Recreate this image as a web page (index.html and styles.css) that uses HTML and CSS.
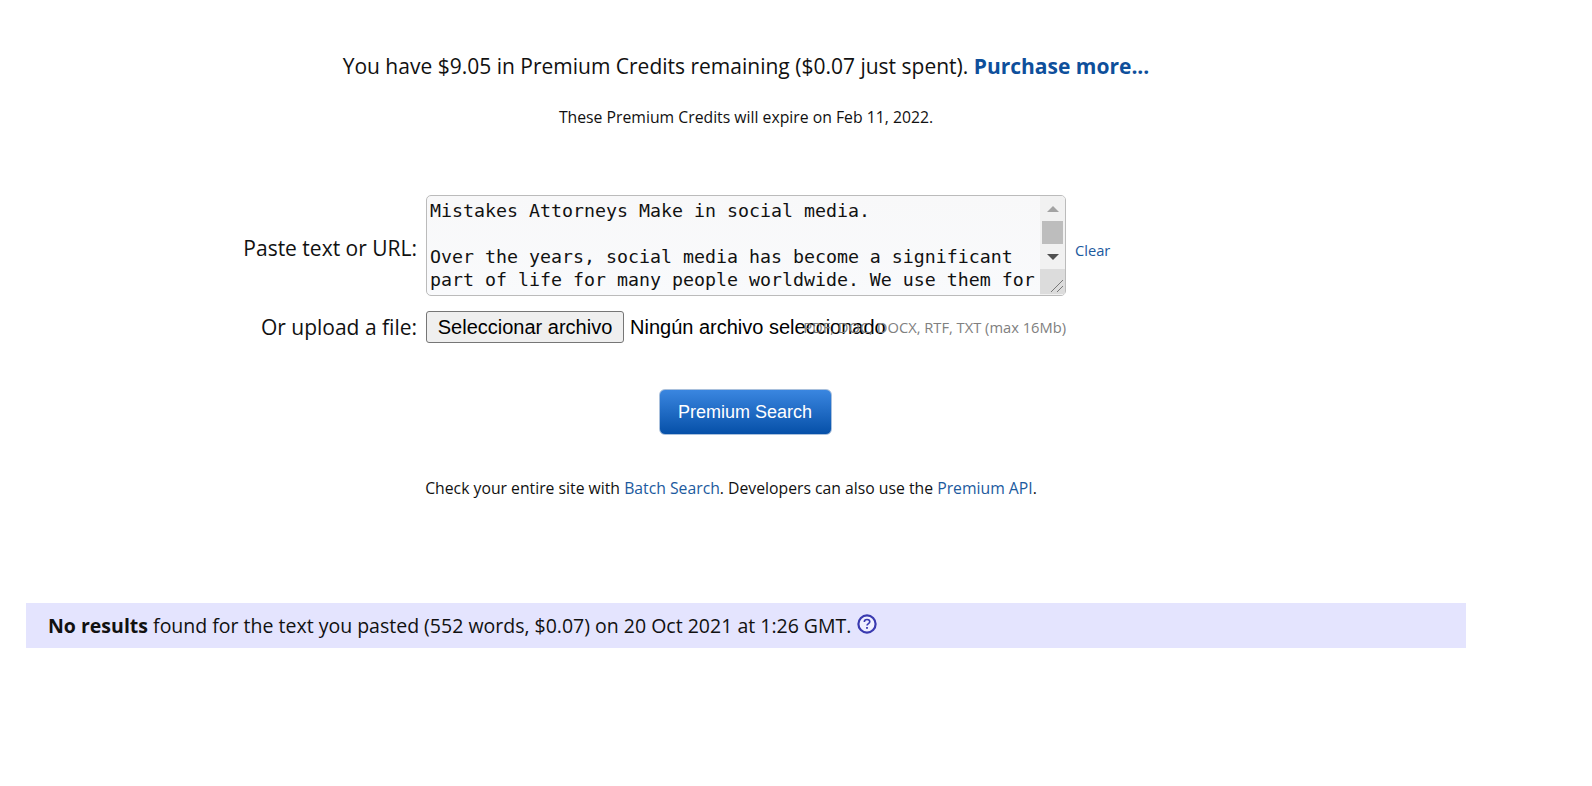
FILE: index.html
```html
<!DOCTYPE html>
<html lang="en">
<head>
<meta charset="utf-8">
<title>Premium Search</title>
<link rel="stylesheet" href="styles.css">
</head>
<body>
<main class="page">
  <p class="credits">You have $9.05 in Premium Credits remaining ($0.07 just spent). <a class="purchase" href="#">Purchase more...</a></p>
  <p class="expiry">These Premium Credits will expire on Feb 11, 2022.</p>
  <form class="search-form">
    <label class="field-label field-label-text" for="text">Paste text or URL:</label>
    <div class="field-main">
      <div class="text-box">
        <textarea class="text-input" id="text" spellcheck="false">Mistakes Attorneys Make in social media.

Over the years, social media has become a significant
part of life for many people worldwide. We use them for</textarea>
        <div class="scrollbar">
          <svg class="scroll-arrow" width="14" height="8" viewBox="0 0 14 8"><path d="M7 1 L13 7 H1 Z" fill="#a3a3a3"/></svg>
          <div class="scroll-thumb"></div>
          <svg class="scroll-arrow scroll-arrow-down" width="14" height="8" viewBox="0 0 14 8"><path d="M1 1 H13 L7 7 Z" fill="#505050"/></svg>
          <div class="scroll-corner">
            <svg width="25" height="25" viewBox="0 0 25 25"><path d="M11 23 L23 11 M17 23 L23 17" stroke="#777" stroke-width="1" fill="none"/></svg>
          </div>
        </div>
      </div>
      <a class="clear" href="#">Clear</a>
    </div>
    <label class="field-label field-label-file">Or upload a file:</label>
    <div class="file-row">
      <button class="file-button" type="button">Seleccionar archivo</button>
      <span class="file-name">Ningún archivo seleccionado</span>
      <span class="file-hint">PDF, DOC, DOCX, RTF, TXT (max 16Mb)</span>
    </div>
  </form>
  <div class="actions"><button class="premium" type="button">Premium Search</button></div>
  <p class="batch">Check your entire site with <a href="#">Batch Search</a>. Developers can also use the <a href="#">Premium API</a>.</p>
  <div class="results">
    <span><b>No results</b> found for the text you pasted (552 words, $0.07) on 20 Oct 2021 at 1:26 GMT.</span>
    <svg class="help" width="20" height="20" viewBox="0 0 20 20"><circle cx="10" cy="10" r="8.6" fill="#f0f0ff" stroke="#3a3ab0" stroke-width="2.2"/><path d="M7.3 8 C7.3 6.3 8.5 5.5 10 5.5 C11.6 5.5 12.8 6.4 12.8 7.8 C12.8 9.6 10 9.6 10 11.6" fill="none" stroke="#3a3ab0" stroke-width="1.6"/><rect x="9.1" y="13" width="1.8" height="1.8" fill="#3a3ab0"/></svg>
  </div>
</main>
</body>
</html>
```
FILE: styles.css
```css
* { box-sizing: border-box; }
html, body { margin: 0; padding: 0; background: #fff; }
body { font-family: "Open Sans", sans-serif; color: #111; height: 786px; overflow: hidden; }
a { color: #1c5a9e; text-decoration: none; }
p { margin: 0; }
.page { width: 1440px; margin-left: 26px; padding-top: 52px; }
.credits { font-size: 21px; line-height: 28px; text-align: center; }
.purchase { font-weight: 700; color: #0e4f9b; }
.expiry { font-size: 15.77px; line-height: 20px; text-align: center; margin-top: 27px; }
.search-form { display: grid; grid-template-columns: 391px 1fr; column-gap: 9px; row-gap: 15px; margin-top: 68px; align-items: center; }
.field-label { font-size: 21px; line-height: 28px; text-align: right; }
.field-label-text { padding-top: 4px; }
.field-main { display: flex; align-items: center; gap: 9px; }
.text-box { position: relative; width: 640px; height: 101px; }
.text-input { display: block; width: 100%; height: 100%; margin: 0; padding: 3px 29px 0 3px; resize: none; overflow: hidden; border: 1px solid #bbb; border-radius: 5px; background: linear-gradient(#f8f8f9, #f9fafc); font-family: "DejaVu Sans Mono", monospace; font-size: 18.27px; line-height: 23px; color: #111; outline: none; }
.scrollbar { position: absolute; top: 1px; right: 1px; bottom: 1px; width: 25px; display: flex; flex-direction: column; align-items: center; background: #f1f1f1; border-radius: 0 4px 4px 0; padding-top: 9px; }
.scroll-thumb { width: 21px; height: 23px; background: #bdbdbd; margin-top: 8px; }
.scroll-arrow-down { margin-top: 9px; }
.scroll-corner { position: absolute; left: 0; bottom: 1px; width: 25px; height: 25px; background: #dcdcdc; }
.scroll-corner svg { display: block; }
.clear { font-size: 14.7px; margin-top: 9px; }
.file-row { position: relative; width: 640px; height: 32px; display: flex; align-items: center; }
.file-button { width: 198px; height: 32px; margin: 0; padding: 0; border: 1px solid #767676; border-radius: 3px; background: #efefef; font-family: "Liberation Sans", Arial, sans-serif; font-size: 20px; color: #000; }
.file-name { margin-left: 6px; font-family: "Liberation Sans", Arial, sans-serif; font-size: 20px; color: #000; white-space: nowrap; }
.file-hint { position: absolute; right: 0; top: 6px; font-size: 14.7px; line-height: 20px; color: #808080; white-space: nowrap; }
.actions { display: flex; justify-content: center; margin-top: 46px; }
.premium { width: 173px; height: 46px; margin-right: 2px; border: 1px solid #a9c0dc; border-radius: 6px; background: linear-gradient(#3a86e0, #0650a8); color: #fff; font-family: "Liberation Sans", Arial, sans-serif; font-size: 18px; padding: 0; }
.batch { font-size: 15.75px; line-height: 22px; text-align: center; margin-top: 42px; padding-right: 30px; }
.results { display: flex; align-items: center; gap: 6px; height: 45px; margin-top: 104px; padding-left: 22px; background: #e4e4fe; font-size: 19.5px; }
.help { display: block; margin-top: -3px; }
```
